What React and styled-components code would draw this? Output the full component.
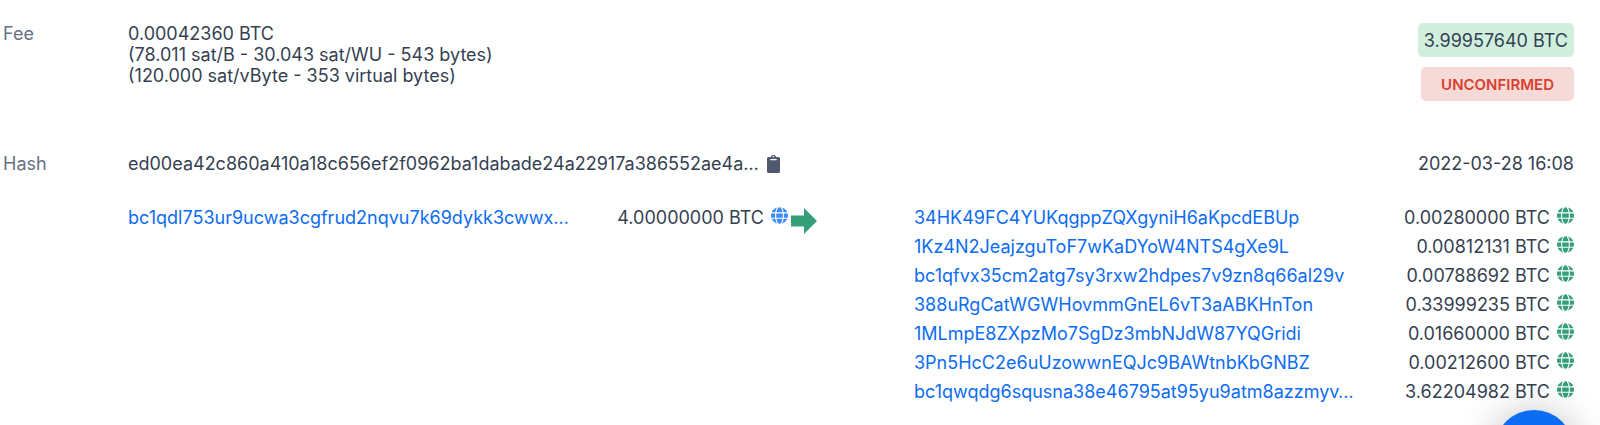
import React from "react";
import styled, { createGlobalStyle } from "styled-components";

const GlobalStyle = createGlobalStyle`
  *, *::before, *::after { box-sizing: border-box; }
  body {
    margin: 0;
    background: #fff;
    color: #353f52;
    font-family: Inter, "Liberation Sans", sans-serif;
    font-size: 18px;
    line-height: 21px;
    overflow: hidden;
  }
`;

const Page = styled.main`
  padding: 23px 26px 16px 3px;
`;

const Row = styled.section`
  display: grid;
  grid-template-columns: 125px minmax(0, 1fr) auto;
  align-items: start;
  margin-bottom: ${(p) => p.$gap || 0}px;
`;

const Label = styled.h2`
  margin: 0;
  font-size: 18px;
  font-weight: 400;
  color: #677184;
`;

const Value = styled.div`
  display: flex;
  align-items: center;
  gap: 8px;
`;

const FeeLines = styled.p`
  margin: 0;
`;

const Badges = styled.div`
  display: flex;
  flex-direction: column;
  align-items: flex-end;
  gap: 10px;
`;

const Badge = styled.span`
  display: flex;
  align-items: center;
  height: 34px;
  border-radius: 5px;
  padding: 0 ${(p) => (p.$alert ? 20 : 6)}px;
  background: ${(p) => (p.$alert ? "#f5dad7" : "#d1efdd")};
  color: ${(p) => (p.$alert ? "#d9402f" : "#353f52")};
  font-size: ${(p) => (p.$alert ? 15 : 18)}px;
  font-weight: ${(p) => (p.$alert ? 600 : 400)};
`;

const CopyButton = styled.button`
  display: flex;
  padding: 0;
  border: 0;
  background: none;
  cursor: pointer;
`;

const Transfers = styled.section`
  display: grid;
  grid-template-columns: minmax(0, 1fr) 126px minmax(0, 1fr);
  padding-left: 125px;
`;

const List = styled.ul`
  margin: 0;
  padding: 0;
  list-style: none;
`;

const Transfer = styled.li`
  display: flex;
  justify-content: space-between;
  align-items: center;
  height: 29px;
`;

const Address = styled.a`
  color: #0c6cf2;
  text-decoration: none;
  white-space: nowrap;
`;

const Amount = styled.span`
  display: flex;
  align-items: center;
  gap: 7px;
  white-space: nowrap;

  svg { margin-bottom: 4px; }
`;

const Arrow = styled.svg`
  margin-top: 5px;
`;

const ChatButton = styled.button`
  position: fixed;
  right: 26px;
  bottom: -65px;
  width: 80px;
  height: 80px;
  border: 0;
  border-radius: 50%;
  background: #0c6cf2;
  box-shadow: 0 5px 40px rgba(0, 0, 0, 0.3);
  cursor: pointer;
`;

function Globe({ color }) {
  return (
    <svg width="17" height="17" viewBox="0 0 496 512" preserveAspectRatio="none" fill={color} aria-hidden="true">
      <path d="M336.500 160C322 70.700 287.800 8 248 8s-74 62.700-88.500 152h177zM152 256c0 22.200 1.200 43.500 3.300 64h185.300c2.100-20.500 3.300-41.800 3.300-64s-1.200-43.500-3.300-64H155.300c-2.100 20.500-3.300 41.800-3.300 64zm324.700-96c-28.600-67.900-86.500-120.400-158-141.600 24.400 33.800 41.200 84.700 50 141.600h108zM177.200 18.400C105.800 39.600 47.800 92.100 19.300 160h108c8.700-56.900 25.500-107.800 49.900-141.600zM487.400 192H372.700c2.100 21 3.300 42.500 3.300 64s-1.200 43-3.300 64h114.600c5.500-20.500 8.600-41.800 8.600-64s-3.100-43.500-8.500-64zM120 256c0-21.500 1.200-43 3.300-64H8.600C3.200 212.500 0 233.800 0 256s3.200 43.500 8.600 64h114.600c-2-21-3.200-42.500-3.200-64zm39.500 96c14.500 89.300 48.700 152 88.500 152s74-62.700 88.500-152h-177zm159.300 141.600c71.400-21.200 129.400-73.700 158-141.600h-108c-8.800 56.900-25.600 107.800-50 141.600zM19.300 352c28.600 67.900 86.500 120.400 158 141.600-24.400-33.800-41.200-84.700-50-141.600h-108z" />
    </svg>
  );
}

function Clipboard() {
  return (
    <svg width="13" height="18" viewBox="0 0 13 18" aria-hidden="true">
      <path
        fill="#4f586e"
        fillRule="evenodd"
        d="M1.500 2H4a2.500 2 0 0 1 5 0h2.500A1.500 1.500 0 0 1 13 3.500v13a1.500 1.500 0 0 1-1.500 1.500h-10A1.500 1.500 0 0 1 0 16.500v-13A1.500 1.500 0 0 1 1.500 2zM6.500 1a.8.8 0 1 0 0 1.600.8.8 0 0 0 0-1.600zM3.300 4v1.200h6.400V4z"
      />
    </svg>
  );
}

const inputs = [["bc1qdl753ur9ucwa3cgfrud2nqvu7k69dykk3cwwx…", "4.00000000"]];

const outputs = [
  ["34HK49FC4YUKqgppZQXgyniH6aKpcdEBUp", "0.00280000"],
  ["1Kz4N2JeajzguToF7wKaDYoW4NTS4gXe9L", "0.00812131"],
  ["bc1qfvx35cm2atg7sy3rxw2hdpes7v9zn8q66al29v", "0.00788692"],
  ["388uRgCatWGWHovmmGnEL6vT3aABKHnTon", "0.33999235"],
  ["1MLmpE8ZXpzMo7SgDz3mbNJdW87YQGridi", "0.01660000"],
  ["3Pn5HcC2e6uUzowwnEQJc9BAWtnbKbGNBZ", "0.00212600"],
  ["bc1qwqdg6squsna38e46795at95yu9atm8azzmyv…", "3.62204982"],
];

function TransferList({ items, color }) {
  return (
    <List>
      {items.map(([address, amount]) => (
        <Transfer key={address}>
          <Address href="#">{address}</Address>
          <Amount>
            {amount} BTC
            <Globe color={color} />
          </Amount>
        </Transfer>
      ))}
    </List>
  );
}

export default function App() {
  return (
    <>
      <GlobalStyle />
      <Page>
        <Row $gap={52}>
          <Label>Fee</Label>
          <FeeLines>
            0.00042360 BTC
            <br />
            (78.011 sat/B - 30.043 sat/WU - 543 bytes)
            <br />
            (120.000 sat/vByte - 353 virtual bytes)
          </FeeLines>
          <Badges>
            <Badge>3.99957640 BTC</Badge>
            <Badge $alert>UNCONFIRMED</Badge>
          </Badges>
        </Row>
        <Row $gap={29}>
          <Label>Hash</Label>
          <Value>
            <span>ed00ea42c860a410a18c656ef2f0962ba1dabade24a22917a386552ae4a…</span>
            <CopyButton aria-label="Copy hash">
              <Clipboard />
            </CopyButton>
          </Value>
          <time dateTime="2022-03-28T16:08">2022-03-28 16:08</time>
        </Row>
        <Transfers>
          <TransferList items={inputs} color="#3d8bfa" />
          <Arrow width="29" height="26" viewBox="0 0 29 26" aria-hidden="true">
            <path fill="#359f79" d="M3 7.500h13V0l13 13-13 13v-7.500H3z" />
          </Arrow>
          <TransferList items={outputs} color="#359f79" />
        </Transfers>
      </Page>
      <ChatButton aria-label="Open chat" />
    </>
  );
}
